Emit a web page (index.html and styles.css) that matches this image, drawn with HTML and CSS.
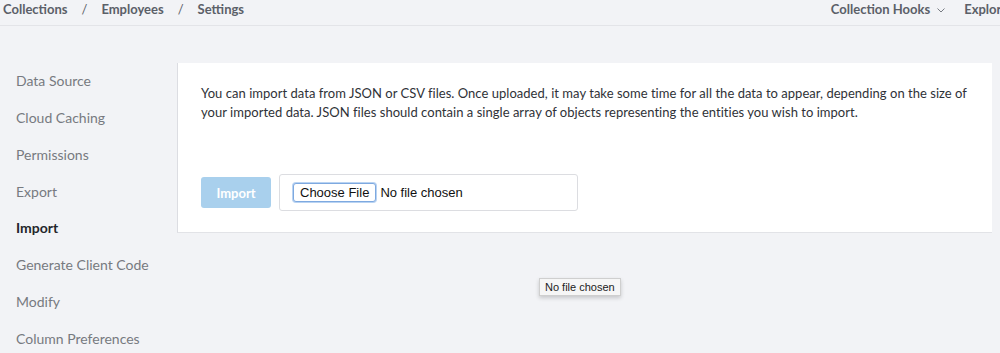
FILE: index.html
```html
<!DOCTYPE html>
<html lang="en">
<head>
<meta charset="utf-8">
<title>Settings - Import</title>
<link rel="stylesheet" href="styles.css">
</head>
<body>
<header class="topbar">
  <nav class="crumbs">
    <span class="crumb">Collections</span>
    <span class="sep">/</span>
    <span class="crumb">Employees</span>
    <span class="sep">/</span>
    <span class="crumb">Settings</span>
  </nav>
  <div class="top-actions">
    <span class="hooks">Collection Hooks
      <svg class="chev" width="8" height="5" viewBox="0 0 8 5"><path d="M0.5 0.5 L4 4 L7.5 0.5" fill="none" stroke="#777b82" stroke-width="1"/></svg>
    </span>
    <span class="explore">Explorer</span>
  </div>
</header>
<main class="layout">
  <aside class="sidenav">
    <a class="nav-item">Data Source</a>
    <a class="nav-item">Cloud Caching</a>
    <a class="nav-item">Permissions</a>
    <a class="nav-item">Export</a>
    <a class="nav-item active">Import</a>
    <a class="nav-item">Generate Client Code</a>
    <a class="nav-item">Modify</a>
    <a class="nav-item">Column Preferences</a>
  </aside>
  <section class="card">
    <p class="desc">You can import data from JSON or CSV files. Once uploaded, it may take some time for all the data to appear, depending on the size of your imported data. JSON files should contain a single array of objects representing the entities you wish to import.</p>
    <div class="actions">
      <button class="btn-import" disabled>Import</button>
      <div class="file-box">
        <span class="choose">Choose File</span>
        <span class="nofile">No file chosen</span>
      </div>
    </div>
  </section>
</main>
<div class="tooltip">No file chosen</div>
</body>
</html>
```
FILE: styles.css
```css
html, body {
  margin: 0;
  padding: 0;
}
body {
  width: 1000px;
  height: 353px;
  overflow: hidden;
  background: #f2f3f6;
  font-family: Lato, "Open Sans", "Liberation Sans", sans-serif;
  position: relative;
}
.topbar {
  height: 25px;
  border-bottom: 1px solid #e3e4e8;
  display: flex;
  justify-content: space-between;
  align-items: flex-start;
  white-space: nowrap;
  overflow: hidden;
}
.crumbs {
  display: flex;
  gap: 14px;
  padding-left: 3px;
  font-size: 13px;
  font-weight: 700;
  color: #5b6068;
  line-height: 18px;
}
.sep { font-weight: 400; }
.top-actions {
  display: flex;
  gap: 19px;
  font-size: 13px;
  font-weight: 700;
  color: #5b6068;
  line-height: 18px;
  margin-right: -13px;
}
.hooks { display: flex; align-items: center; gap: 7px; }
.chev { margin-top: 2px; }
.layout {
  display: flex;
  padding-top: 37px;
}
.sidenav {
  width: 177px;
  flex: none;
  display: flex;
  flex-direction: column;
}
.nav-item {
  display: block;
  padding-left: 16px;
  height: 36.86px;
  line-height: 35px;
  font-size: 14px;
  color: #777a80;
}
.nav-item.active {
  color: #23262b;
  font-weight: 700;
}
.card {
  width: 815px;
  height: 170px;
  box-sizing: border-box;
  background: #fff;
  border-left: 1px solid #dcdde2;
  border-bottom: 1px solid #e2e3e7;
  padding: 21px 16px 0 23px;
}
.desc {
  margin: 0;
  font-size: 13px;
  letter-spacing: 0.03px;
  line-height: 19px;
  color: #2f3237;
}
.actions {
  display: flex;
  align-items: center;
  gap: 8px;
  margin-top: 52px;
}
.btn-import {
  width: 70px;
  height: 31px;
  border: 0;
  border-radius: 3px;
  background: #a9d0ed;
  color: #fff;
  font-family: inherit;
  font-size: 13px;
  font-weight: 700;
  padding: 0;
}
.file-box {
  width: 299px;
  height: 37px;
  box-sizing: border-box;
  border: 1px solid #dcdde1;
  border-radius: 3px;
  display: flex;
  align-items: center;
  padding-left: 13px;
  gap: 4px;
  font-family: "Liberation Sans", Arial, sans-serif;
  font-size: 13px;
  color: #111;
}
.choose {
  height: 19px;
  box-sizing: border-box;
  padding: 0 6px;
  border: 1px solid #7ea9e0;
  border-radius: 3px;
  box-shadow: 0 0 0 1px #b9d3f2;
  line-height: 17px;
  background: #fff;
}
.tooltip {
  position: absolute;
  left: 539px;
  top: 278px;
  height: 18px;
  box-sizing: border-box;
  padding: 0 5px;
  line-height: 16px;
  font-family: "Liberation Sans", Arial, sans-serif;
  font-size: 11px;
  color: #222;
  background: #f6f6f6;
  border: 1px solid #cfcfcf;
  box-shadow: 0 2px 4px rgba(0,0,0,0.18);
}
```
